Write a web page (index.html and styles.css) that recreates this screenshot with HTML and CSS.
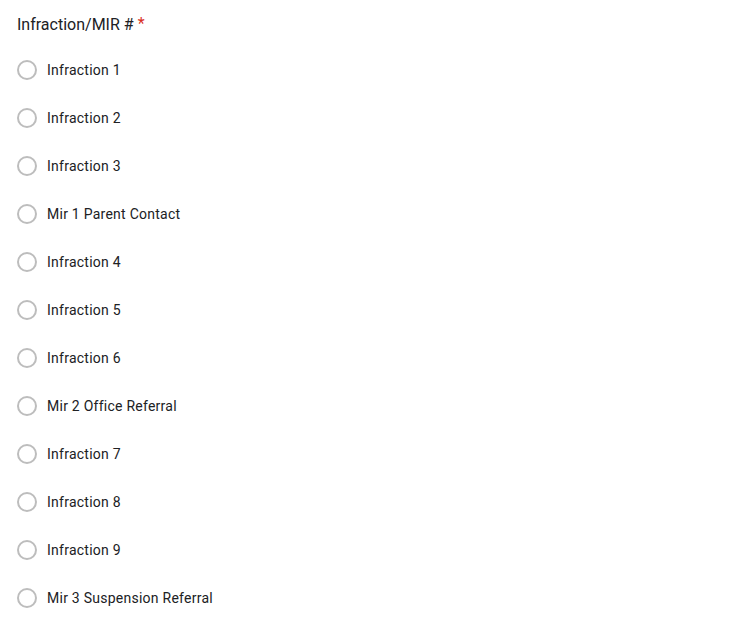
FILE: index.html
```html
<!DOCTYPE html>
<html>
<head>
<meta charset="utf-8">
<link rel="stylesheet" href="styles.css">
</head>
<body>
<div class="question">
  <div class="title">Infraction/MIR #<span class="req">*</span></div>
  <div class="options">
    <label class="opt"><span class="radio"></span><span class="lbl">Infraction 1</span></label>
    <label class="opt"><span class="radio"></span><span class="lbl">Infraction 2</span></label>
    <label class="opt"><span class="radio"></span><span class="lbl">Infraction 3</span></label>
    <label class="opt"><span class="radio"></span><span class="lbl">Mir 1 Parent Contact</span></label>
    <label class="opt"><span class="radio"></span><span class="lbl">Infraction 4</span></label>
    <label class="opt"><span class="radio"></span><span class="lbl">Infraction 5</span></label>
    <label class="opt"><span class="radio"></span><span class="lbl">Infraction 6</span></label>
    <label class="opt"><span class="radio"></span><span class="lbl">Mir 2 Office Referral</span></label>
    <label class="opt"><span class="radio"></span><span class="lbl">Infraction 7</span></label>
    <label class="opt"><span class="radio"></span><span class="lbl">Infraction 8</span></label>
    <label class="opt"><span class="radio"></span><span class="lbl">Infraction 9</span></label>
    <label class="opt"><span class="radio"></span><span class="lbl">Mir 3 Suspension Referral</span></label>
  </div>
</div>
</body>
</html>
```
FILE: styles.css
```css
html, body {
  margin: 0;
  padding: 0;
  background: #fff;
}
body {
  font-family: Roboto, "Liberation Sans", Arial, sans-serif;
  color: #202124;
}
.question {
  padding: 13px 17px 0 17px;
}
.title {
  font-size: 16px;
  line-height: 24px;
  letter-spacing: 0;
}
.req {
  color: #d93025;
  margin-left: 4px;
  position: relative;
  top: -1px;
}
.options {
  margin-top: 9px;
  display: flex;
  flex-direction: column;
}
.opt {
  display: flex;
  align-items: center;
  height: 48px;
  gap: 10px;
}
.radio {
  box-sizing: border-box;
  width: 20px;
  height: 20px;
  border: 2px solid #bdbdbd;
  border-radius: 50%;
  flex: none;
}
.lbl {
  font-size: 14px;
  line-height: 20px;
  letter-spacing: 0.25px;
}
```
